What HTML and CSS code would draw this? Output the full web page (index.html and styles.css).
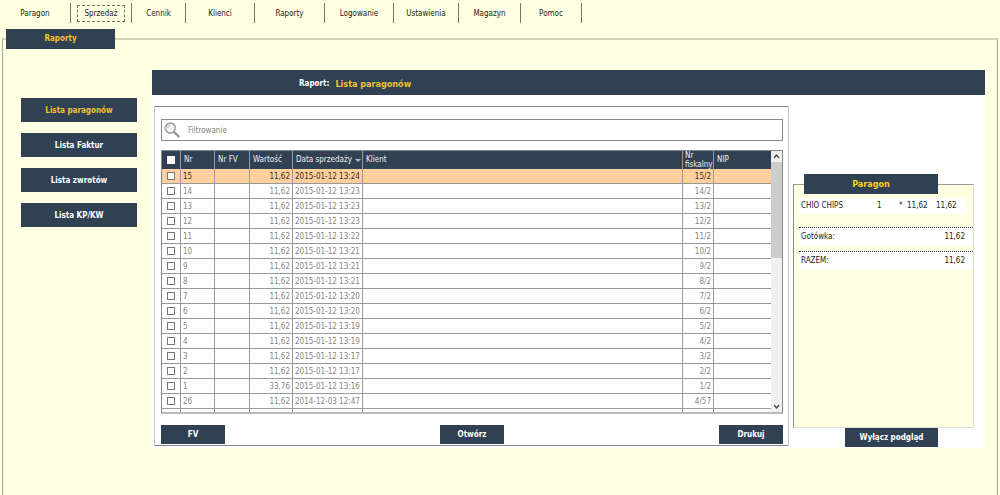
FILE: index.html
```html
<!DOCTYPE html>
<html lang="pl">
<head>
<meta charset="utf-8">
<title>Raporty - Lista paragonów</title>
<link rel="stylesheet" href="styles.css">
</head>
<body>
<nav class="menu">
  <button class="menu-item">Paragon</button>
  <button class="menu-item menu-item-focus"><span>Sprzedaż</span></button>
  <button class="menu-item">Cennik</button>
  <button class="menu-item">Klienci</button>
  <button class="menu-item">Raporty</button>
  <button class="menu-item">Logowanie</button>
  <button class="menu-item">Ustawienia</button>
  <button class="menu-item">Magazyn</button>
  <button class="menu-item">Pomoc</button>
</nav>
<main class="frame">
  <h1 class="frame-title">Raporty</h1>
  <div class="layout">
    <aside class="side">
      <button class="btn side-btn active">Lista paragonów</button>
      <button class="btn side-btn">Lista Faktur</button>
      <button class="btn side-btn">Lista zwrotów</button>
      <button class="btn side-btn">Lista KP/KW</button>
    </aside>
    <section class="report">
      <header class="report-head"><span>Raport:</span><h2>Lista paragonów</h2></header>
      <div class="report-body">
        <div class="list">
          <label class="search">
            <svg class="search-icon" viewBox="0 0 16 16" width="16" height="16" aria-hidden="true">
              <circle cx="6.3" cy="6.1" r="5" fill="#f6f6f6" stroke="#a2a2a2" stroke-width="1.6"/>
              <path d="M3.6 6a2.7 2.7 0 0 1 2.4-2.6" fill="none" stroke="#b8b8b8" stroke-width="1"/>
              <path d="M10.2 10.2l4.4 4.2" stroke="#999" stroke-width="2.4" stroke-linecap="round"/>
            </svg>
            <input type="text" placeholder="Filtrowanie" aria-label="Filtrowanie">
          </label>
          <div class="grid">
            <div class="grid-view">
              <table class="table">
                <colgroup><col class="c-check"><col class="c-nr"><col class="c-fv"><col class="c-val"><col class="c-date"><col><col class="c-fisc"><col class="c-nip"></colgroup>
                <thead><tr><th><input type="checkbox" aria-label="Zaznacz wszystkie"></th><th>Nr</th><th>Nr FV</th><th>Wartość</th><th><span class="sort">Data sprzedaży<i></i></span></th><th>Klient</th><th class="two-line">Nr<br>fiskalny</th><th>NIP</th></tr></thead>
                <tbody>
                <tr class="selected"><td><input type="checkbox" aria-label="15"></td><td>15</td><td></td><td class="num">11,62</td><td>2015-01-12 13:24</td><td></td><td class="num">15/2</td><td></td></tr>
                <tr><td><input type="checkbox" aria-label="14"></td><td>14</td><td></td><td class="num">11,62</td><td>2015-01-12 13:23</td><td></td><td class="num">14/2</td><td></td></tr>
                <tr><td><input type="checkbox" aria-label="13"></td><td>13</td><td></td><td class="num">11,62</td><td>2015-01-12 13:23</td><td></td><td class="num">13/2</td><td></td></tr>
                <tr><td><input type="checkbox" aria-label="12"></td><td>12</td><td></td><td class="num">11,62</td><td>2015-01-12 13:23</td><td></td><td class="num">12/2</td><td></td></tr>
                <tr><td><input type="checkbox" aria-label="11"></td><td>11</td><td></td><td class="num">11,62</td><td>2015-01-12 13:22</td><td></td><td class="num">11/2</td><td></td></tr>
                <tr><td><input type="checkbox" aria-label="10"></td><td>10</td><td></td><td class="num">11,62</td><td>2015-01-12 13:21</td><td></td><td class="num">10/2</td><td></td></tr>
                <tr><td><input type="checkbox" aria-label="9"></td><td>9</td><td></td><td class="num">11,62</td><td>2015-01-12 13:21</td><td></td><td class="num">9/2</td><td></td></tr>
                <tr><td><input type="checkbox" aria-label="8"></td><td>8</td><td></td><td class="num">11,62</td><td>2015-01-12 13:21</td><td></td><td class="num">8/2</td><td></td></tr>
                <tr><td><input type="checkbox" aria-label="7"></td><td>7</td><td></td><td class="num">11,62</td><td>2015-01-12 13:20</td><td></td><td class="num">7/2</td><td></td></tr>
                <tr><td><input type="checkbox" aria-label="6"></td><td>6</td><td></td><td class="num">11,62</td><td>2015-01-12 13:20</td><td></td><td class="num">6/2</td><td></td></tr>
                <tr><td><input type="checkbox" aria-label="5"></td><td>5</td><td></td><td class="num">11,62</td><td>2015-01-12 13:19</td><td></td><td class="num">5/2</td><td></td></tr>
                <tr><td><input type="checkbox" aria-label="4"></td><td>4</td><td></td><td class="num">11,62</td><td>2015-01-12 13:19</td><td></td><td class="num">4/2</td><td></td></tr>
                <tr><td><input type="checkbox" aria-label="3"></td><td>3</td><td></td><td class="num">11,62</td><td>2015-01-12 13:17</td><td></td><td class="num">3/2</td><td></td></tr>
                <tr><td><input type="checkbox" aria-label="2"></td><td>2</td><td></td><td class="num">11,62</td><td>2015-01-12 13:17</td><td></td><td class="num">2/2</td><td></td></tr>
                <tr><td><input type="checkbox" aria-label="1"></td><td>1</td><td></td><td class="num">33,76</td><td>2015-01-12 13:16</td><td></td><td class="num">1/2</td><td></td></tr>
                <tr><td><input type="checkbox" aria-label="26"></td><td>26</td><td></td><td class="num">11,62</td><td>2014-12-03 12:47</td><td></td><td class="num">4/57</td><td></td></tr>
                <tr><td><input type="checkbox" aria-label="Następny"></td><td></td><td></td><td></td><td></td><td></td><td></td><td></td></tr>
                </tbody>
              </table>
            </div>
            <div class="scroll" aria-hidden="true">
              <svg viewBox="0 0 11 11" width="11" height="11"><path d="M3 7l2.500-3 2.500 3" fill="none" stroke="#444" stroke-width="1.300"/></svg>
              <div class="thumb"></div>
              <svg class="down" viewBox="0 0 11 11" width="11" height="11"><path d="M3 4l2.500 3 2.500-3" fill="none" stroke="#444" stroke-width="1.300"/></svg>
            </div>
          </div>
          <div class="actions">
            <button class="btn action">FV</button>
            <button class="btn action">Otwórz</button>
            <button class="btn action">Drukuj</button>
          </div>
        </div>
        <div class="preview">
          <div class="receipt">
            <h3 class="receipt-title">Paragon</h3>
            <div class="line item"><span>CHIO CHIPS</span><span>1</span><span>*</span><span>11,62</span><span>11,62</span></div>
            <div class="line total first"><span>Gotówka:</span><span>11,62</span></div>
            <div class="line total"><span>RAZEM:</span><span>11,62</span></div>
          </div>
          <button class="btn toggle">Wyłącz podgląd</button>
        </div>
      </div>
    </section>
  </div>
</main>
</body>
</html>
```
FILE: styles.css
```css
* { box-sizing: border-box; }
body {
  margin: 0;
  height: 100vh;
  overflow: hidden;
  display: flex;
  flex-direction: column;
  background: #ffffe1;
  color: #222;
  font: 8px/10px "DejaVu Sans Condensed", "DejaVu Sans", sans-serif;
}
button, input { font: inherit; color: inherit; }
h1, h2, h3 { margin: 0; font-size: 8px; font-weight: bold; }

.menu {
  display: grid;
  grid-template-columns: 71px 61px 54px 69px 70px 69px 65px 62px 61px;
  padding-top: 3px;
}
.menu-item {
  height: 20px;
  padding: 1px 0 0;
  border: 0;
  border-right: 1px solid #77775f;
  background: none;
  white-space: nowrap;
}
.menu-item-focus span {
  display: block;
  margin: 0 6px;
  padding: 3px 0 2px;
  border: 1px dashed #77775f;
}

.frame {
  flex: 1;
  margin: 15px 2px 0;
  border: 2px solid #d5d5b5;
  border-width: 2px 1px 0;
  border-color: #d5d5b5 #a5a590;
}
.frame-title {
  width: 109px;
  margin: -11px 0 0 3px;
  padding: 5px 0;
  background: #304153;
  color: #f2c230;
  text-align: center;
}
.layout {
  display: flex;
  align-items: flex-start;
  gap: 15px;
  padding: 21px 12px 0 18px;
}
.side {
  display: flex;
  flex-direction: column;
  gap: 11px;
  width: 116px;
  padding-top: 28px;
}
.btn {
  padding: 0;
  border: 0;
  background: #304153;
  color: #fff;
  font-weight: bold;
  white-space: nowrap;
}
.side-btn { height: 24px; padding-top: 1px; }
.side-btn.active { color: #f2c230; }

.report { flex: 1; background: #fff; }
.report-head {
  display: flex;
  align-items: center;
  gap: 6px;
  height: 25px;
  padding: 2px 0 0 147px;
  background: #304153;
  color: #fff;
  font-weight: bold;
}
.report-head h2 { color: #f2c230; font-size: 9px; }
.report-body {
  display: flex;
  gap: 4px;
  padding: 11px 11px 0 2px;
}
.list {
  flex: 1;
  min-width: 0;
  margin-bottom: 2px;
  padding: 12px 5px 1px 6px;
  border: 1px solid #84868c;
  border-left-color: #c8c8d0;
  border-right-color: #c8c8c8;
}
.search {
  display: flex;
  align-items: center;
  gap: 8px;
  height: 22px;
  padding: 0 2px;
  border: 1px solid #888;
}
.search input {
  flex: 1;
  padding: 2px 0 0;
  border: 0;
  outline: 0;
  background: none;
}
.search input::placeholder { color: #858585; opacity: 1; }

.grid {
  display: flex;
  height: 264px;
  margin-top: 9px;
  border: 1px solid #888;
  border-bottom: 2px solid #bbb;
}
.grid-view { flex: 1; overflow: hidden; }
.table {
  width: 100%;
  table-layout: fixed;
  border-collapse: separate;
  border-spacing: 0;
}
.c-check { width: 19px; }
.c-nr { width: 34px; }
.c-fv { width: 35px; }
.c-val { width: 43px; }
.c-date { width: 70px; }
.c-fisc { width: 31px; }
.c-nip { width: 57px; }
.table th, .table td {
  padding: 0 2px;
  border-right: 1px solid #999;
  white-space: nowrap;
  text-align: left;
}
.table th:last-child, .table td:last-child { border-right: 0; }
.table th {
  height: 18px;
  padding: 0 3px;
  background: #304153;
  color: #f0f0f0;
  font-weight: normal;
}
.table td {
  height: 15px;
  padding-top: 1px;
  border-bottom: 1px solid #999;
  color: #858585;
}
.table td.num { text-align: right; }
.table .selected td { background: #ffcf9c; color: #3c2c1c; }
.table th:first-child, .table td:first-child { padding: 0; text-align: center; }
.table input {
  appearance: none;
  display: block;
  width: 8px;
  height: 8px;
  margin: 0 auto;
  border: 1px solid #777;
  background: #fff;
}
.table th input { border-color: #fff; }
.table .two-line {
  padding: 0 0 0 2px;
  line-height: 9px;
}
.sort { display: flex; align-items: center; justify-content: space-between; margin-right: -2px; }
.sort i {
  border: 3px solid transparent;
  border-top-color: #b5bcc4;
  border-bottom: 0;
}
.scroll {
  display: flex;
  flex-direction: column;
  width: 11px;
  background: #f0f0f0;
}
.thumb { height: 96px; background: #cdcdcd; }
.down { margin-top: auto; }

.actions {
  display: flex;
  justify-content: space-between;
  padding-top: 11px;
}
.action { width: 64px; height: 19px; }

.preview {
  display: flex;
  flex-direction: column;
  width: 181px;
  padding-top: 78px;
}
.receipt {
  flex: 1;
  border: 1px solid #deded0;
  border-top-color: #999;
  border-left-color: #8c8c80;
  background: #ffffe1;
}
.receipt-title {
  width: 134px;
  height: 20px;
  margin: -11px 0 0 10px;
  background: #304153;
  color: #f5d020;
  font-size: 9px;
  line-height: 20px;
  text-align: center;
}
.line {
  margin-left: 5px;
  background: #fff;
  line-height: 16px;
}
.item {
  display: grid;
  grid-template-columns: 76px 22px 8px 29px 1fr;
  margin: 4px 7px 0 5px;
  padding-left: 2px;
}
.total {
  display: flex;
  justify-content: space-between;
  margin-top: 6px;
  padding: 1px 8px 0 2px;
  border-top: 1px dotted #333;
}
.total.first { margin-top: 13px; }
.toggle {
  align-self: flex-end;
  width: 93px;
  height: 19px;
  margin: 0 36px 1px 0;
}
```
